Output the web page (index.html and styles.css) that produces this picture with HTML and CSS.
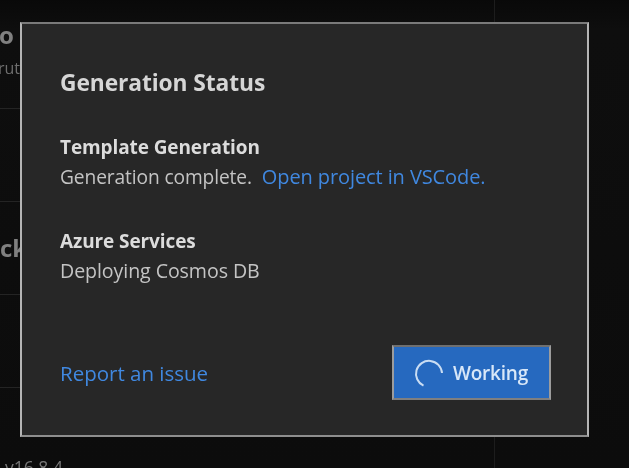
FILE: index.html
```html
<!DOCTYPE html>
<html lang="en">
<head>
<meta charset="utf-8">
<title>Generation Status</title>
<link rel="stylesheet" href="styles.css">
</head>
<body>
<div class="page">
  <div class="backdrop">
    <div class="pane">
      <div class="row row-first">
        <div class="bg-title">o</div>
        <div class="bg-sub">rut</div>
      </div>
      <div class="row row-plain"></div>
      <div class="row row-ck"><div class="bg-title">ck</div></div>
      <div class="row row-plain"></div>
      <div class="row-last">v16.8.4</div>
    </div>
  </div>
  <section class="modal">
    <h1 class="title">Generation Status</h1>
    <div class="group group-first">
      <h2 class="label">Template Generation</h2>
      <p class="text text-done">Generation complete.<a class="link link-open">Open project in VSCode.</a></p>
    </div>
    <div class="group group-second">
      <h2 class="label">Azure Services</h2>
      <p class="text text-deploy">Deploying Cosmos DB</p>
    </div>
    <div class="footer">
      <a class="link link-report">Report an issue</a>
      <button class="button">
        <svg class="spinner" width="30" height="30" viewBox="0 0 30 30"><path d="M9.5 27.6A13 13 0 1 1 28 15" fill="none" stroke="#c9ddf3" stroke-width="2"/></svg>
        <span>Working</span>
      </button>
    </div>
  </section>
</div>
</body>
</html>
```

FILE: styles.css
```css
* { box-sizing: border-box; }
html, body { margin: 0; padding: 0; }
body {
  width: 629px;
  height: 468px;
  overflow: hidden;
  background: #0d0d0d;
  font-family: "Open Sans", "Noto Sans", sans-serif;
}
.page {
  position: relative;
  width: 629px;
  height: 468px;
  overflow: hidden;
  filter: blur(0.45px);
}
.backdrop {
  height: 468px;
  background: linear-gradient(#090909 0, #0e0e0e 30px, #0c0c0c 100%);
}
.pane {
  width: 495px;
  height: 468px;
  border-right: 1px solid #1d1d1d;
  color: #777;
  overflow: hidden;
}
.row { border-bottom: 1px solid #242424; }
.row-first { height: 109px; padding-top: 19px; }
.row-plain { height: 93px; }
.row-ck { height: 93px; padding-top: 30px; }
.bg-title { font-size: 24px; font-weight: 700; line-height: 32px; color: #808080; }
.row-first .bg-title { margin-left: -1px; }
.bg-sub { font-size: 16px; line-height: 20px; margin-left: -2px; margin-top: 7px; color: #6e6e6e; }
.row-last { font-size: 17.5px; line-height: 18px; padding: 70px 0 0 5px; color: #777; }

.modal {
  position: absolute;
  left: 20px;
  top: 22px;
  width: 569px;
  height: 415px;
  background: #272727;
  border: 2px solid #b5b5b5;
  border-top-color: #7a7a7a;
  border-bottom-color: #8e8e8e;
  padding: 0 36px 0 38px;
  display: flex;
  flex-direction: column;
  color: #d0d0d0;
}
.title {
  margin: 44px 0 0;
  font-size: 22.8px;
  line-height: 30px;
  font-weight: 700;
  color: #d6d6d6;
  letter-spacing: -0.1px;
}
.group-first { margin-top: 34px; }
.group-second { margin-top: 34px; }
.label {
  margin: 0;
  font-size: 19px;
  line-height: 30px;
  font-weight: 700;
  color: #dcdcdc;
  letter-spacing: -0.1px;
}
.text {
  margin: 0;
  line-height: 30px;
  color: #c4c4c4;
}
.text-done { font-size: 19.2px; letter-spacing: -0.12px; }
.text-deploy { font-size: 19.6px; letter-spacing: -0.08px; }
.link { color: #4088e0; }
.link-open { margin-left: 10px; font-size: 20px; line-height: 1; letter-spacing: -0.1px; }
.footer {
  margin-top: auto;
  margin-bottom: 35px;
  display: flex;
  justify-content: space-between;
  align-items: center;
}
.link-report { font-size: 20.5px; line-height: 30px; }
.button {
  width: 159px;
  height: 55px;
  background: #2669bf;
  border: 2px solid #9c9c9c;
  border-top-color: #6f6f6f;
  border-bottom-color: #7f7f7f;
  color: #d8e7f8;
  font-family: inherit;
  font-size: 19px;
  font-weight: 600;
  letter-spacing: -0.2px;
  display: flex;
  align-items: center;
  justify-content: center;
  gap: 9px;
  padding: 0 1px 0 0;
}
.spinner { flex: none; }
```
